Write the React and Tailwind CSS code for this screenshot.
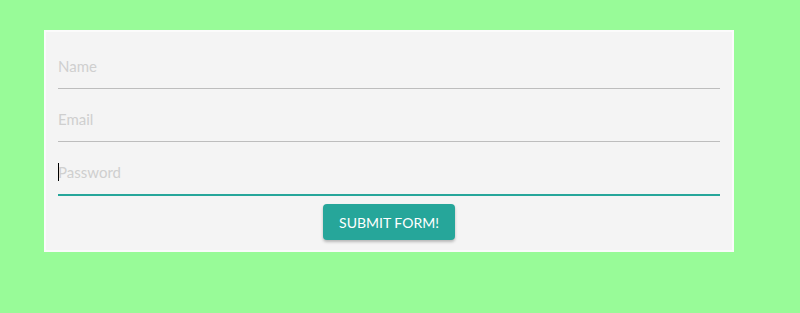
import { useState } from 'react';

const FIELDS = [
  { name: 'name', type: 'text', placeholder: 'Name' },
  { name: 'email', type: 'email', placeholder: 'Email' },
  { name: 'password', type: 'password', placeholder: 'Password', active: true },
];

export default function App() {
  const [form, setForm] = useState({ name: '', email: '', password: '' });

  return (
    <div className="min-h-[313px] w-full bg-[#98fb98] pt-[30px] pl-[44px] font-['Lato','Liberation_Sans',sans-serif]">
      <form
        onSubmit={(e) => e.preventDefault()}
        className="w-[690px] bg-[#f4f4f4] border-2 border-[#fbfbfb] px-[12px] pt-[12px] pb-[10px] flex flex-col"
      >
        {/* Inputs */}
        <div className="flex flex-col gap-2">
          {FIELDS.map((f) => (
            <div key={f.name} className="relative">
              <input
                type={f.type}
                value={form[f.name]}
                onChange={(e) => setForm({ ...form, [f.name]: e.target.value })}
                placeholder={f.placeholder}
                className={`w-full h-[45px] bg-transparent outline-none text-[15px] text-[#333] placeholder-[#cfcfcf] caret-transparent ${
                  f.active
                    ? 'border-b border-[#26a69a] shadow-[0_1px_0_0_#26a69a]'
                    : 'border-b border-[#bdbdbd]'
                }`}
              />
              {f.active && (
                <span className="absolute left-0 top-[13px] h-[18px] w-px bg-black" />
              )}
            </div>
          ))}
        </div>

        {/* Submit */}
        <div className="flex justify-center mt-[9px]">
          <button
            type="submit"
            className="h-9 px-4 rounded-sm bg-[#26a69a] text-white text-[14px] uppercase tracking-normal shadow-[0_2px_3px_rgba(0,0,0,0.25)]"
          >
            Submit form!
          </button>
        </div>
      </form>
    </div>
  );
}
